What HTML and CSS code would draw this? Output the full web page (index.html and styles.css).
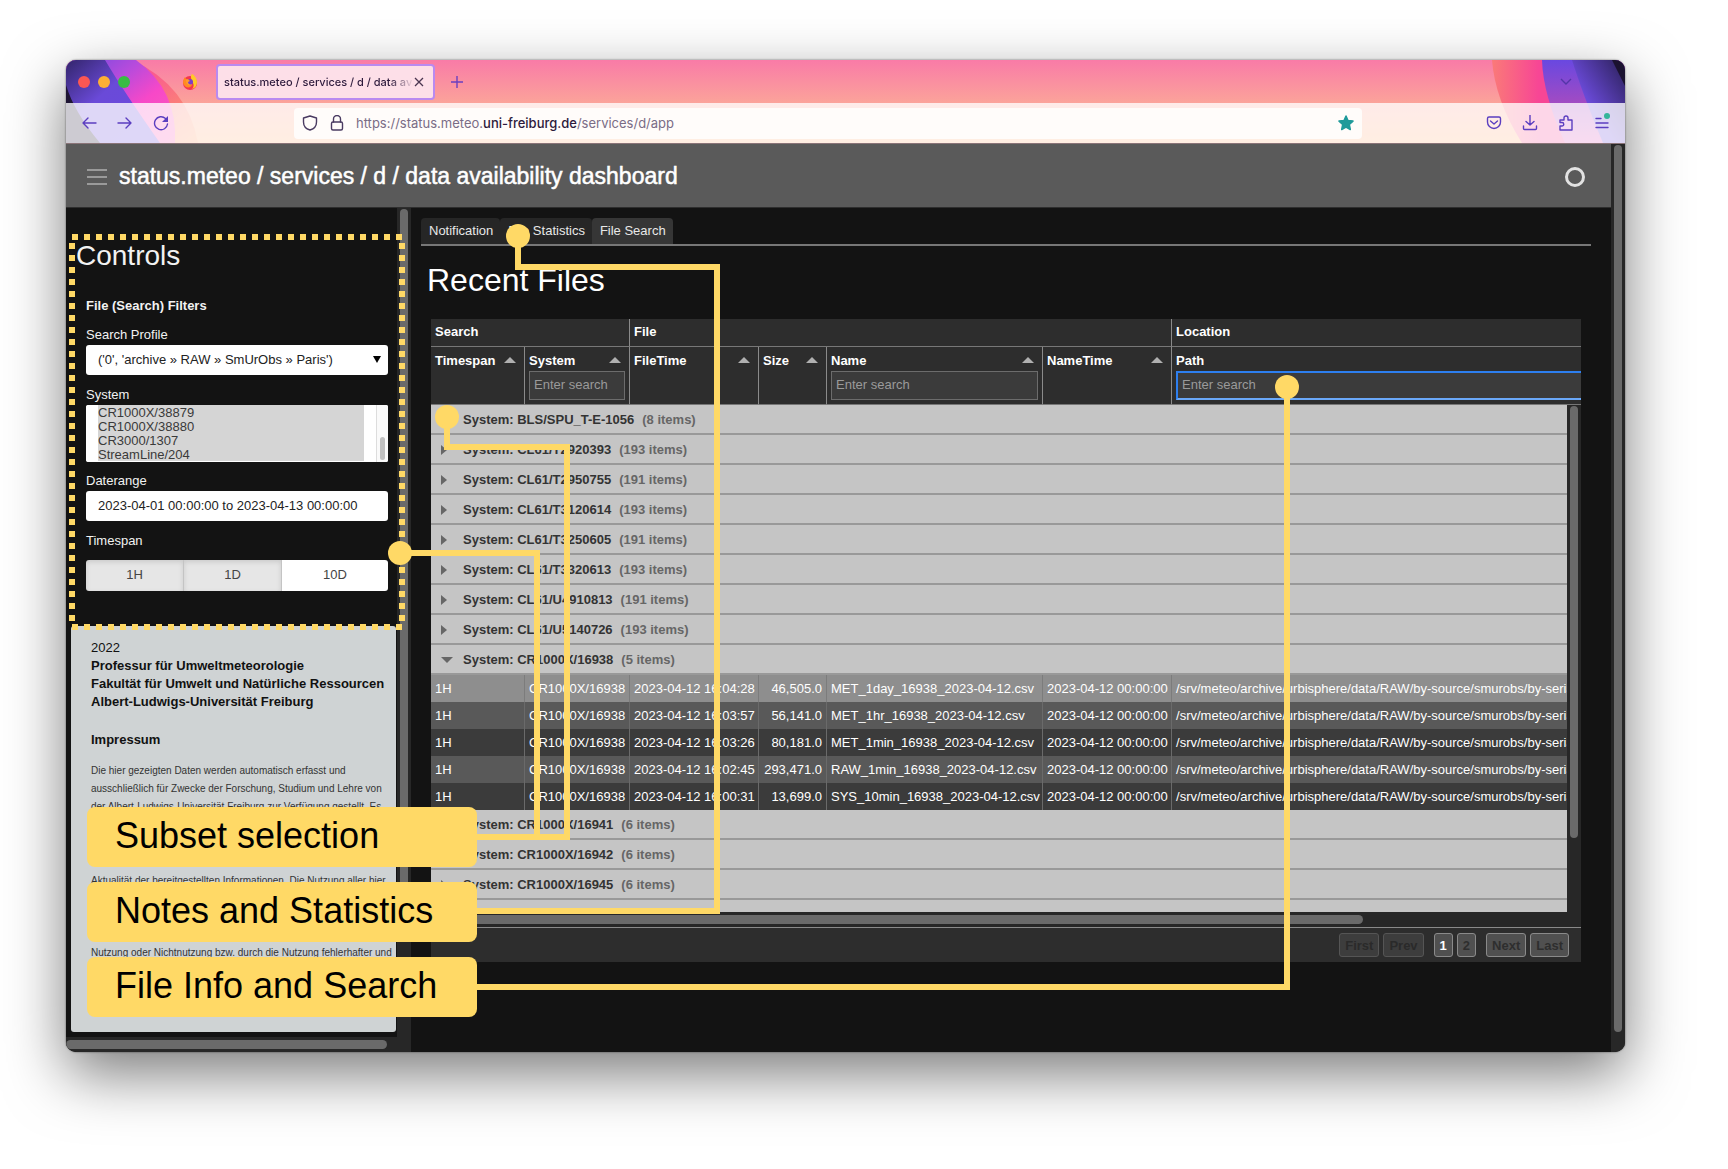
FILE: index.html
```html
<!DOCTYPE html>
<html lang="en">
<head>
  <meta charset="UTF-8">
  <title>status.meteo / services / d / data availability dashboard</title>
  <link rel="stylesheet" href="styles.css">
</head>
<body>

  <div class="window">

    <!-- browser chrome -->
    <div class="chrome">
      <svg class="theme theme-left" width="140" height="83" viewBox="0 0 140 83">
        <defs>
          <linearGradient id="violet" x1="0" y1="0" x2="1" y2="1">
            <stop offset="0" stop-color="#33256b"/>
            <stop offset="0.4" stop-color="#6a4ad8"/>
            <stop offset="1" stop-color="#6a48e0"/>
          </linearGradient>
          <linearGradient id="magenta" x1="0" y1="0" x2="1" y2="1">
            <stop offset="0" stop-color="#6c4be0"/>
            <stop offset="0.35" stop-color="#b84bdc"/>
            <stop offset="0.6" stop-color="#f748c8"/>
            <stop offset="1" stop-color="#fb62b6"/>
          </linearGradient>
          <linearGradient id="coral" x1="0" y1="0" x2="1" y2="1">
            <stop offset="0" stop-color="#fa4a96"/>
            <stop offset="0.4" stop-color="#fa5a90"/>
            <stop offset="0.7" stop-color="#fb8078"/>
            <stop offset="1" stop-color="#ffa068"/>
          </linearGradient>
        </defs>
        <path d="M66 0Q122 26 132 83H0V0z" fill="url(#coral)"/>
        <path d="M0 0H70Q112 30 109 83H0z" fill="url(#magenta)"/>
        <path d="M0 0H39Q58 32 94 83H0z" fill="url(#violet)"/>
        <path d="M0 25Q8 52 34 83H0z" fill="#1f1534"/>
      </svg>
      <svg class="theme theme-right" width="160" height="83" viewBox="0 0 160 83">
        <defs>
          <linearGradient id="rose" x1="0" y1="0" x2="1" y2="0">
            <stop offset="0" stop-color="#fa7a78"/>
            <stop offset="0.35" stop-color="#f74695"/>
            <stop offset="1" stop-color="#f74695"/>
          </linearGradient>
          <linearGradient id="plum" x1="0" y1="0" x2="0" y2="1">
            <stop offset="0" stop-color="#6948e0"/>
            <stop offset="0.5" stop-color="#a04bc4"/>
            <stop offset="1" stop-color="#e060c0"/>
          </linearGradient>
          <linearGradient id="night" x1="1" y1="0" x2="0" y2="1">
            <stop offset="0" stop-color="#2b2058"/>
            <stop offset="0.6" stop-color="#6a4ad8"/>
            <stop offset="1" stop-color="#6a4aea"/>
          </linearGradient>
        </defs>
        <path d="M27 0Q30 40 57 83H160V0z" fill="url(#rose)"/>
        <path d="M77 0Q78 35 100 83H160V0z" fill="url(#plum)"/>
        <path d="M107 0Q118 35 138 83H160V0z" fill="url(#night)"/>
        <path d="M147 0L160 26V0z" fill="#1b1230"/>
      </svg>

      <div class="tabstrip">
        <span class="light red"></span>
        <span class="light amber"></span>
        <span class="light green"></span>
        <svg class="firefox" width="16" height="16" viewBox="0 0 16 16">
          <circle cx="8" cy="9" r="7" fill="#f5364f"/>
          <path d="M10 0c2 1 5 4 5 8a7 7 0 0 1-5 7c2-2 2-4 1-6-1-3-2-3-2-6 0-1 0-2 1-3z" fill="#ffc928"/>
          <path d="M1 9c0-3 1-5 2-6l1 2 3 0c1 1-1 2-2 2 0 3 2 5 5 4-1 3-7 4-9-2z" fill="#ff8a20"/>
          <circle cx="8" cy="8" r="3" fill="#7a3fc8"/>
          <path d="M4 6c2-1 3 0 4 1L6 8c0 2 2 3 4 2-1 3-6 2-6-4z" fill="#ff9a2c"/>
        </svg>
        <div class="browser-tab">
          <span class="tab-title">status.meteo / services / d / data availability</span>
          <button class="icon-button tab-close" aria-label="Close tab">
            <svg width="10" height="10" viewBox="0 0 10 10"><path d="M1 1l8 8M9 1L1 9" stroke="#4a3550" stroke-width="1.3"/></svg>
          </button>
        </div>
        <button class="icon-button new-tab" aria-label="New tab">
          <svg width="12" height="12" viewBox="0 0 12 12"><path d="M6 0v12M0 6h12" stroke="#6a3fc0" stroke-width="1.4"/></svg>
        </button>
        <button class="icon-button list-tabs" aria-label="List tabs">
          <svg width="12" height="8" viewBox="0 0 12 8"><path d="M1 1l5 5 5-5" fill="none" stroke="#5435a8" stroke-width="1.4"/></svg>
        </button>
      </div>

      <div class="navbar">
        <button class="icon-button" aria-label="Back">
          <svg width="16" height="16" viewBox="0 0 16 16"><path d="M15 8H2M7 3L2 8l5 5" class="line"/></svg>
        </button>
        <button class="icon-button" aria-label="Forward">
          <svg width="16" height="16" viewBox="0 0 16 16"><path d="M1 8h13M9 3l5 5-5 5" class="line"/></svg>
        </button>
        <button class="icon-button" aria-label="Reload">
          <svg width="16" height="16" viewBox="0 0 16 16"><path d="M14.500 9a6.500 6.500 0 1 1-2-5.500" class="line"/><path d="M15 1v6H9z" fill="#5b3ec0"/></svg>
        </button>
        <div class="urlbar">
          <svg width="16" height="16" viewBox="0 0 16 16"><path d="M8 1l6.500 2v4c0 4-3 7-6.500 8C4.500 14 1.500 11 1.500 7V3z" class="line dark"/></svg>
          <svg width="16" height="16" viewBox="0 0 16 16"><rect x="2.500" y="7" width="11" height="8" rx="1.500" class="line dark"/><path d="M4.500 7V4a3.500 3.500 0 0 1 7 0v3" class="line dark"/></svg>
          <span class="url">https://status.meteo.<b>uni-freiburg.de</b>/services/d/app</span>
          <svg width="16" height="16" viewBox="0 0 16 16"><path d="M8 1l2 4.600 5 .5-3.700 3.400 1 5L8 12l-4.300 2.500 1-5L1 6.100l5-.5z" fill="#1f9a9a" stroke="#1f9a9a" stroke-width="1.500" stroke-linejoin="round"/></svg>
        </div>
        <div class="nav-actions">
          <svg width="16" height="16" viewBox="0 0 16 16"><path d="M3 2h10a1.500 1.500 0 0 1 1.500 1.500V7a6.500 6.500 0 0 1-13 0V3.500A1.500 1.500 0 0 1 3 2z" class="line"/><path d="M4.500 6L8 9l3.500-3" class="line"/></svg>
          <svg width="16" height="16" viewBox="0 0 16 16"><path d="M8 0v10M4 6.500L8 10l4-3.500M1.500 11v2.500a1 1 0 0 0 1 1h11a1 1 0 0 0 1-1V11" class="line"/></svg>
          <svg width="16" height="16" viewBox="0 0 16 16"><path d="M2 15v-4h2a1.500 1.500 0 0 0 0-3.500H2V5h4V3a2 2 0 0 1 4 0v2h4v10z" class="line"/></svg>
          <svg class="menu" width="16" height="16" viewBox="0 0 16 16"><path d="M2 3.500h5M2 8h12M2 12.500h12" class="line"/><circle cx="13" cy="1" r="3" fill="#35b59a"/></svg>
        </div>
      </div>
    </div>

    <div class="viewport">
      <div class="app">
        <header class="app-header">
          <button class="icon-button" aria-label="Toggle sidebar">
            <svg width="20" height="16" viewBox="0 0 20 16"><path d="M0 1h20M0 8h20M0 15h20" stroke="#9a9a9a" stroke-width="2"/></svg>
          </button>
          <h1 class="app-title">status.meteo / services / d / data availability dashboard</h1>
          <span class="busy"></span>
        </header>

        <div class="content">
          <aside class="sidebar">
            <div class="sidebar-body">
              <div class="sidebar-main">
                <form class="controls">
                  <h2 class="controls-title">Controls</h2>
                  <div class="fields">
                    <h3 class="filters-title">File (Search) Filters</h3>
                    <label for="profile">Search Profile</label>
                    <div class="select-wrap">
                      <select id="profile" class="box">
                        <option>('0', 'archive » RAW » SmUrObs » Paris')</option>
                      </select>
                    </div>
                    <label for="system">System</label>
                    <div class="listbox">
                      <select id="system" class="system-list" multiple size="4">
                        <option>CR1000X/38879</option>
                        <option>CR1000X/38880</option>
                        <option>CR3000/1307</option>
                        <option>StreamLine/204</option>
                      </select>
                      <span class="list-track"><span class="list-thumb"></span></span>
                    </div>
                    <label for="daterange">Daterange</label>
                    <input id="daterange" class="box" type="text" value="2023-04-01 00:00:00 to 2023-04-13 00:00:00">
                    <span class="field-name">Timespan</span>
                    <div class="timespan">
                      <button type="button">1H</button>
                      <button type="button">1D</button>
                      <button type="button" class="selected">10D</button>
                    </div>
                  </div>
                </form>

                <section class="imprint" lang="de">
                  <p class="owner">2022<br>
                    <b>Professur für Umweltmeteorologie<br>
                    Fakultät für Umwelt und Natürliche Ressourcen<br>
                    Albert-Ludwigs-Universität Freiburg</b></p>
                  <h3>Impressum</h3>
                  <p class="legal">Die hier gezeigten Daten werden automatisch erfasst und<br>
                    ausschließlich für Zwecke der Forschung, Studium und Lehre von<br>
                    der Albert-Ludwigs-Universität Freiburg zur Verfügung gestellt. Es</p>
                  <p class="legal legal-middle">Aktualität der bereitgestellten Informationen. Die Nutzung aller hier</p>
                  <p class="legal legal-last">Nutzung oder Nichtnutzung bzw. durch die Nutzung fehlerhafter und</p>
                </section>
              </div>
              <div class="track-x"><span class="thumb sidebar-thumb-x"></span></div>
            </div>
            <div class="track-y sidebar-track"><span class="thumb"></span></div>
          </aside>

          <main class="main">
            <nav class="tabs">
              <a href="#notification">Notification</a>
              <a href="#statistics">File Statistics</a>
              <a href="#search" class="active">File Search</a>
            </nav>
            <h2 class="main-title">Recent Files</h2>

            <div class="grid">
              <div class="grid-view">
                <table>
                  <colgroup>
                    <col class="c-span"><col class="c-system"><col class="c-time"><col class="c-size"><col class="c-name"><col class="c-time"><col>
                  </colgroup>
                  <thead>
                    <tr class="head-groups">
                      <th colspan="2">Search</th>
                      <th colspan="4">File</th>
                      <th>Location</th>
                    </tr>
                    <tr class="head-cols">
                      <th><div class="col-title">Timespan<i class="sort"></i></div></th>
                      <th><div class="col-title">System<i class="sort"></i></div><input type="text" placeholder="Enter search" aria-label="Search system"></th>
                      <th><div class="col-title">FileTime<i class="sort"></i></div></th>
                      <th><div class="col-title">Size<i class="sort"></i></div></th>
                      <th><div class="col-title">Name<i class="sort"></i></div><input type="text" placeholder="Enter search" aria-label="Search name"></th>
                      <th><div class="col-title">NameTime<i class="sort"></i></div></th>
                      <th><div class="col-title">Path</div><input class="focused" type="text" placeholder="Enter search" aria-label="Search path"></th>
                    </tr>
                  </thead>
                  <tbody>
                    <tr class="group"><td colspan="7"><i class="arrow"></i>System: BLS/SPU_T-E-1056<span>(8 items)</span></td></tr>
                    <tr class="group"><td colspan="7"><i class="arrow"></i>System: CL61/T2920393<span>(193 items)</span></td></tr>
                    <tr class="group"><td colspan="7"><i class="arrow"></i>System: CL61/T2950755<span>(191 items)</span></td></tr>
                    <tr class="group"><td colspan="7"><i class="arrow"></i>System: CL61/T3120614<span>(193 items)</span></td></tr>
                    <tr class="group"><td colspan="7"><i class="arrow"></i>System: CL61/T3250605<span>(191 items)</span></td></tr>
                    <tr class="group"><td colspan="7"><i class="arrow"></i>System: CL61/T3320613<span>(193 items)</span></td></tr>
                    <tr class="group"><td colspan="7"><i class="arrow"></i>System: CL61/U4910813<span>(191 items)</span></td></tr>
                    <tr class="group"><td colspan="7"><i class="arrow"></i>System: CL61/U5140726<span>(193 items)</span></td></tr>
                    <tr class="group open"><td colspan="7"><i class="arrow"></i>System: CR1000X/16938<span>(5 items)</span></td></tr>
                    <tr class="row hover"><td>1H</td><td>CR1000X/16938</td><td>2023-04-12 16:04:28</td><td class="num">46,505.0</td><td>MET_1day_16938_2023-04-12.csv</td><td>2023-04-12 00:00:00</td><td>/srv/meteo/archive/urbisphere/data/RAW/by-source/smurobs/by-serial</td></tr>
                    <tr class="row even"><td>1H</td><td>CR1000X/16938</td><td>2023-04-12 16:03:57</td><td class="num">56,141.0</td><td>MET_1hr_16938_2023-04-12.csv</td><td>2023-04-12 00:00:00</td><td>/srv/meteo/archive/urbisphere/data/RAW/by-source/smurobs/by-serial</td></tr>
                    <tr class="row"><td>1H</td><td>CR1000X/16938</td><td>2023-04-12 16:03:26</td><td class="num">80,181.0</td><td>MET_1min_16938_2023-04-12.csv</td><td>2023-04-12 00:00:00</td><td>/srv/meteo/archive/urbisphere/data/RAW/by-source/smurobs/by-serial</td></tr>
                    <tr class="row even"><td>1H</td><td>CR1000X/16938</td><td>2023-04-12 16:02:45</td><td class="num">293,471.0</td><td>RAW_1min_16938_2023-04-12.csv</td><td>2023-04-12 00:00:00</td><td>/srv/meteo/archive/urbisphere/data/RAW/by-source/smurobs/by-serial</td></tr>
                    <tr class="row"><td>1H</td><td>CR1000X/16938</td><td>2023-04-12 16:00:31</td><td class="num">13,699.0</td><td>SYS_10min_16938_2023-04-12.csv</td><td>2023-04-12 00:00:00</td><td>/srv/meteo/archive/urbisphere/data/RAW/by-source/smurobs/by-serial</td></tr>
                    <tr class="group"><td colspan="7"><i class="arrow"></i>System: CR1000X/16941<span>(6 items)</span></td></tr>
                    <tr class="group"><td colspan="7"><i class="arrow"></i>System: CR1000X/16942<span>(6 items)</span></td></tr>
                    <tr class="group"><td colspan="7"><i class="arrow"></i>System: CR1000X/16945<span>(6 items)</span></td></tr>
                    <tr class="group"><td colspan="7"></td></tr>
                  </tbody>
                </table>
                <div class="track-y grid-track"><span class="thumb"></span></div>
              </div>
              <div class="track-x"><span class="thumb grid-thumb-x"></span></div>
              <div class="pager">
                <button disabled>First</button>
                <button disabled>Prev</button>
                <span class="pages">
                  <button class="current">1</button>
                  <button>2</button>
                </span>
                <button>Next</button>
                <button>Last</button>
              </div>
            </div>
          </main>
        </div>
      </div>
      <div class="track-y page-track"><span class="thumb"></span></div>
    </div>
  </div>

  <!-- callouts drawn over the window -->
  <svg class="callouts" width="1728" height="1169" viewBox="0 0 1728 1169">
    <rect x="72" y="237" width="330" height="390" class="dots"/>
    <path d="M400 553H537V837"/>
    <path d="M447 417V447H567V837H470"/>
    <path d="M518 236V267H717V911H470"/>
    <path d="M1287 387V987H470"/>
    <circle cx="400" cy="553" r="12"/>
    <circle cx="447" cy="417" r="12"/>
    <circle cx="518" cy="236" r="12"/>
    <circle cx="1287" cy="387" r="12"/>
  </svg>
  <div class="callout-labels">
    <div>Subset selection</div>
    <div>Notes and Statistics</div>
    <div>File Info and Search</div>
  </div>

</body>
</html>
```
FILE: styles.css
```css
* {
  box-sizing: border-box;
}
body {
  margin: 0;
  padding: 60px 103px 117px 66px;
  min-height: 100vh;
  display: flex;
  position: relative;
  background: #ffffff;
  font-family: "Liberation Sans", Arial, sans-serif;
  font-size: 13px;
  overflow: hidden;
}
h1, h2, h3, p {
  margin: 0;
}
button, input, select {
  font: inherit;
}

.window {
  flex: 1;
  min-width: 0;
  display: flex;
  flex-direction: column;
  border-radius: 10px;
  overflow: hidden;
  background: #131313;
  box-shadow: 0 0 2px rgba(0, 0, 0, 0.6), 0 22px 60px rgba(0, 0, 0, 0.52);
}

/* browser chrome */
.chrome {
  position: relative;
  background: linear-gradient(#f97ba7, #fba39a 43px, #ffb27a);
  font-family: Inter, sans-serif;
}
.theme {
  position: absolute;
  top: 0;
}
.theme-left {
  left: 0;
}
.theme-right {
  right: 0;
}
.tabstrip {
  position: relative;
  display: flex;
  align-items: center;
  height: 43px;
  padding: 0 53px 0 12px;
}
.light {
  width: 12px;
  height: 12px;
  margin-right: 8px;
  border-radius: 50%;
}
.red {
  background: #fc5753;
}
.amber {
  background: #fdb035;
}
.green {
  background: #38bd43;
}
.firefox {
  margin-left: 44px;
}
.icon-button {
  display: flex;
  padding: 0;
  border: none;
  background: none;
}
.browser-tab {
  display: flex;
  align-items: center;
  width: 219px;
  height: 36px;
  margin-left: 18px;
  padding: 0 9px 0 6px;
  background: #fddfe8;
  border: 2px solid #b98af0;
  border-radius: 4px;
}
.tab-title {
  flex: 1;
  overflow: hidden;
  white-space: nowrap;
  font-size: 11px;
  font-weight: 500;
  color: #2d1a3c;
  -webkit-mask-image: linear-gradient(to right, #000 165px, transparent 190px);
  mask-image: linear-gradient(to right, #000 165px, transparent 190px);
}
.new-tab {
  margin-left: 16px;
}
.list-tabs {
  margin-left: auto;
}
.navbar {
  position: relative;
  display: flex;
  align-items: center;
  gap: 20px;
  height: 41px;
  padding: 0 15px;
  background: rgba(255, 255, 255, 0.78);
  border-bottom: 1px solid #8a7478;
}
.line {
  fill: none;
  stroke: #5b3ec0;
  stroke-width: 1.4;
  stroke-linecap: round;
  stroke-linejoin: round;
}
.line.dark {
  stroke: #4a3b62;
}
.menu {
  overflow: visible;
}
.urlbar {
  flex: 1;
  display: flex;
  align-items: center;
  gap: 11px;
  height: 31px;
  margin-left: 105px;
  padding: 0 8px;
  background: #fffcfa;
  border-radius: 4px;
}
.url {
  flex: 1;
  font-size: 13px;
  color: #7a6c86;
}
.url b {
  font-weight: 500;
  color: #2d1a3c;
}
.nav-actions {
  display: flex;
  gap: 20px;
  margin-left: 104px;
}

/* scroll bars */
.track-y {
  width: 14px;
  flex: none;
  padding: 1px 3px;
  background: #272727;
}
.track-x {
  height: 15px;
  flex: none;
  padding: 3px 0;
  background: #272727;
}
.thumb {
  display: block;
  height: 100%;
  border-radius: 5px;
  background: #6a6a6a;
}

/* app */
.viewport {
  flex: 1;
  display: flex;
}
.app {
  flex: 1;
  min-width: 0;
  display: flex;
  flex-direction: column;
}
.page-track {
  padding-bottom: 20px;
}
.app-header {
  display: flex;
  align-items: center;
  gap: 12px;
  height: 64px;
  padding: 2px 26px 0 21px;
  background: #5a5a5a;
  border-bottom: 1px solid #2e2e2e;
}
.app-title {
  flex: 1;
  font-size: 23px;
  font-weight: 400;
  color: #ffffff;
  -webkit-text-stroke: 0.5px #ffffff;
}
.busy {
  width: 20px;
  height: 20px;
  border: 3px solid #e2e2e2;
  border-radius: 50%;
}
.content {
  flex: 1;
  display: flex;
}

/* sidebar */
.sidebar {
  width: 345px;
  flex: none;
  display: flex;
}
.sidebar-body {
  flex: 1;
  min-width: 0;
  display: flex;
  flex-direction: column;
}
.sidebar-main {
  flex: 1;
  display: flex;
  flex-direction: column;
  padding: 0 1px 5px 5px;
}
.sidebar-thumb-x {
  width: 321px;
}
.sidebar-track {
  padding-bottom: 140px;
}
.controls {
  height: 418px;
  padding: 31px 8px 0 5px;
  color: #f2f2f2;
}
.controls-title {
  font-size: 28px;
  line-height: 34px;
  font-weight: 400;
}
.fields {
  display: flex;
  flex-direction: column;
  padding: 25px 0 0 10px;
}
.filters-title {
  margin-bottom: 13px;
  font-size: 13px;
  line-height: 16px;
}
.fields label, .field-name {
  line-height: 16px;
  margin-bottom: 2px;
}
.box {
  width: 100%;
  height: 30px;
  margin-bottom: 12px;
  padding: 0 12px 2px;
  border: none;
  border-radius: 3px;
  background: #ffffff;
  color: #222222;
}
.select-wrap {
  position: relative;
}
.select-wrap .box {
  display: block;
  appearance: none;
}
.select-wrap::after {
  content: "";
  position: absolute;
  right: 7px;
  top: 11px;
  border: 4px solid transparent;
  border-top: 7px solid #000000;
  border-bottom: none;
}
.listbox {
  display: flex;
  height: 57px;
  margin-bottom: 11px;
  background: #ffffff;
  border-radius: 2px;
  overflow: hidden;
}
.system-list {
  flex: 1;
  height: 57px;
  padding: 0 12px;
  border: none;
  background: #ffffff;
  overflow: hidden;
  appearance: none;
}
.system-list option {
  height: 14px;
  min-height: 14px;
  padding: 0;
  line-height: 14px;
  background: #d5d5d5;
  color: #3a3a3a;
}
.list-track {
  width: 12px;
  padding: 32px 3px 2px;
  border-left: 1px solid #dddddd;
  background: #fafafa;
}
.list-thumb {
  display: block;
  height: 100%;
  border-radius: 3px;
  background: #c0c0c0;
}
.timespan {
  display: grid;
  grid-template-columns: 98px 98px 1fr;
  height: 31px;
  margin-top: 9px;
  border-radius: 3px;
  overflow: hidden;
}
.timespan button {
  padding: 0 0 3px;
  border: none;
  border-right: 1px solid #c4c4c4;
  background: #e6e6e6;
  box-shadow: inset 0 2px 5px rgba(0, 0, 0, 0.12);
  color: #444444;
}
.timespan .selected {
  border: none;
  background: #ffffff;
  box-shadow: none;
}
.imprint {
  flex: 1;
  padding: 13px 0 0 20px;
  background: #cfd3d4;
  border-radius: 3px;
  color: #111111;
  white-space: nowrap;
}
.owner {
  line-height: 18px;
}
.imprint h3 {
  margin: 20px 0 13px;
  font-size: 13px;
  line-height: 18px;
}
.legal {
  font-size: 10px;
  line-height: 18px;
  color: #333333;
}
.legal-middle {
  margin-top: 56px;
}
.legal-last {
  margin-top: 54px;
}

/* main area */
.main {
  flex: 1;
  min-width: 0;
  padding: 10px 20px 0 10px;
}
.tabs {
  display: flex;
  border-bottom: 2px solid #777777;
}
.tabs a {
  padding: 0 7px 0 8px;
  height: 26px;
  line-height: 26px;
  border-radius: 4px 4px 0 0;
  background: #262626;
  color: #e8e8e8;
  text-decoration: none;
}
.tabs .active {
  background: #363636;
}
.main-title {
  padding: 15px 0 20px 6px;
  font-size: 32px;
  line-height: 38px;
  font-weight: 400;
  color: #ffffff;
}
.grid {
  margin: 0 10px;
  background: #2d2d2d;
}
.grid-view {
  position: relative;
  height: 593px;
  overflow: hidden;
}
.grid-track {
  position: absolute;
  top: 86px;
  right: 0;
  bottom: 0;
  padding-bottom: 74px;
}
.grid-thumb-x {
  width: 81%;
}
table {
  width: 100%;
  table-layout: fixed;
  border-collapse: separate;
  border-spacing: 0;
}
.c-span {
  width: 94px;
}
.c-system {
  width: 105px;
}
.c-time {
  width: 129px;
}
.c-size {
  width: 68px;
}
.c-name {
  width: 216px;
}
th {
  padding: 0 4px;
  overflow: hidden;
  text-align: left;
  vertical-align: top;
  white-space: nowrap;
  color: #ffffff;
  border-right: 1px solid #8a8a8a;
}
th:last-child {
  border-right: none;
}
.head-groups th {
  height: 28px;
  line-height: 26px;
  border-bottom: 1px solid #777777;
}
.head-cols th {
  height: 58px;
  border-bottom: 1px solid #777777;
}
.col-title {
  display: flex;
  align-items: center;
  justify-content: space-between;
  height: 24px;
  padding: 2px 4px 0 0;
}
.sort {
  border: 6px solid transparent;
  border-top: none;
  border-bottom: 6px solid #b0b0b0;
}
th input {
  display: block;
  width: 100%;
  height: 29px;
  padding: 0 4px 2px;
  border: 1px solid #6c6c6c;
  background: #3b3b3b;
  font-weight: 400;
  color: #ffffff;
}
th input::placeholder {
  color: #9a9a9a;
}
th .focused {
  width: calc(100% + 20px);
  border: 2px solid #2d7ff0;
  border-bottom-color: #6aa8f8;
}
td {
  padding: 0 4px;
  overflow: hidden;
  white-space: nowrap;
}
.group td {
  height: 30px;
  padding-left: 10px;
  background: #c5c5c5;
  border-bottom: 2px solid #999999;
  font-weight: 700;
  color: #333333;
}
.group span {
  margin-left: 8px;
  color: #666666;
}
.arrow {
  display: inline-block;
  width: 6px;
  margin-right: 16px;
  border: 5px solid transparent;
  border-left: 6px solid #666666;
  border-right: none;
  vertical-align: middle;
}
.open .arrow {
  width: 12px;
  margin-right: 10px;
  border: 6px solid transparent;
  border-top: 6px solid #666666;
  border-bottom: none;
}
.row td {
  height: 27px;
  background: #3b3b3b;
  border-right: 1px solid #6a6a6a;
  color: #ffffff;
}
.row td:last-child {
  border-right: none;
}
.row.even td {
  background: #595959;
}
.row.hover td {
  background: #8e8e8e;
  border-right-color: #7c7c7c;
}
.row .num {
  text-align: right;
}
.pager {
  display: flex;
  align-items: center;
  justify-content: flex-end;
  gap: 4px;
  height: 35px;
  padding-right: 12px;
  border-top: 1px solid #8a8a8a;
}
.pager button {
  height: 24px;
  padding: 0 5px;
  border: 1px solid #8a8a8a;
  border-radius: 3px;
  background: #505050;
  font-weight: 700;
  color: #2e2e2e;
}
.pager button:disabled {
  border-color: #555555;
  background: #3d3d3d;
  color: #2a2a2a;
}
.pager .current {
  color: #ffffff;
}
.pages {
  display: flex;
  gap: 4px;
  margin: 0 6px;
}

/* callouts */
.callouts {
  position: absolute;
  left: 0;
  top: 0;
}
.callouts path, .dots {
  fill: none;
  stroke: #ffd966;
  stroke-width: 6;
}
.dots {
  stroke-dasharray: 6 6;
}
.callouts circle {
  fill: #ffd966;
}
.callout-labels {
  position: absolute;
  left: 87px;
  top: 807px;
  display: flex;
  flex-direction: column;
  gap: 15px;
}
.callout-labels div {
  width: 390px;
  height: 60px;
  padding: 0 28px;
  border-radius: 8px;
  background: #ffd966;
  font-size: 36px;
  line-height: 58px;
  color: #000000;
}
```
